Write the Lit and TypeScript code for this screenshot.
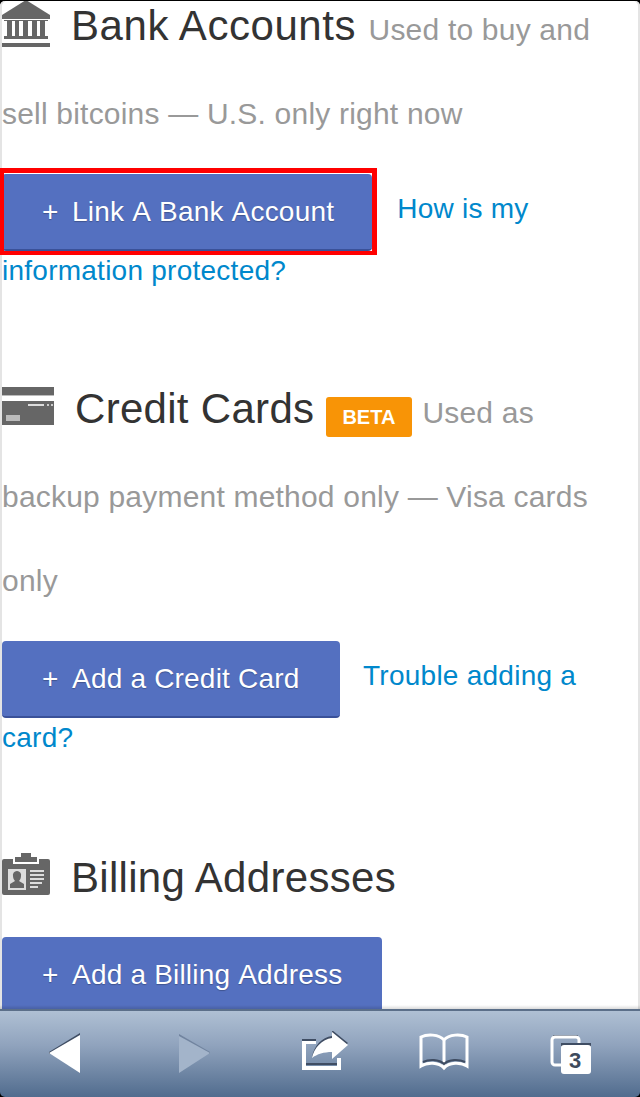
import { LitElement, html, css } from "lit";
import { customElement } from "lit/decorators.js";

const bank = html`<svg class="ico bank" width="48" height="47" viewBox="0 0 48 47"><g fill="#666"><path d="M24 0 L48 15 V19 H0 V15 Z"/><rect x="2" y="20" width="44" height="1"/><rect x="5" y="21" width="5" height="15"/><rect x="13" y="21" width="4" height="15"/><rect x="21" y="21" width="5" height="15"/><rect x="30" y="21" width="5" height="15"/><rect x="38" y="21" width="5" height="15"/><rect x="2" y="36" width="44" height="3"/><rect x="0" y="43" width="48" height="4"/></g></svg>`;
const card = html`<svg class="ico card" width="52" height="38" viewBox="0 0 52 38"><rect width="52" height="8" fill="#666"/><rect y="8" width="52" height="1" fill="#bbb"/><rect y="14" width="52" height="24" fill="#666"/><rect x="26" y="17" width="16" height="2" fill="#ddd"/><rect x="45" y="17" width="2" height="2" fill="#ccc"/><rect x="49" y="17" width="2" height="2" fill="#ccc"/><rect x="4" y="28" width="14" height="6" fill="#bbb"/></svg>`;
const id = html`<svg class="ico id" width="48" height="42" viewBox="0 0 48 42"><path fill="#666" d="M19 0h10v4h6v5H13V4h6zM2 6h9v5h26V6h9a2 2 0 0 1 2 2v32a2 2 0 0 1-2 2H2a2 2 0 0 1-2-2V8a2 2 0 0 1 2-2z"/><rect x="6" y="16" width="18" height="21" fill="#ddd"/><path fill="#666" d="M15 18a4 4 0 0 1 4 5c0 2-1 4-2 5l5 3v4H8v-4l5-3c-1-1-2-3-2-5a4 4 0 0 1 4-5z"/><g fill="#ddd"><rect x="28" y="17" width="14" height="2"/><rect x="28" y="21" width="14" height="2"/><rect x="28" y="25" width="14" height="2"/><rect x="28" y="29" width="12" height="2"/><rect x="28" y="33" width="8" height="2"/></g></svg>`;

@customElement("app-root")
export class AppRoot extends LitElement {
  static styles = css`
    :host { display: flex; flex-direction: column; height: 1097px; overflow: hidden; box-sizing: border-box; padding-top: 1px; background: #000; font-family: "Liberation Sans", Arial, sans-serif; }
    .page { position: relative; flex: 1; min-height: 0; overflow: hidden; box-sizing: border-box; background: #fff; border-radius: 5px 5px 0 0; box-shadow: inset 2px 0 #e4e4e4, inset -2px 0 #e4e4e4; padding: 0 18px 0 2px; }
    .page::after { content: ""; position: absolute; left: 0; right: 0; bottom: 0; height: 4px; background: linear-gradient(transparent, rgba(0,0,0,.14)); }
    .scroll { margin-top: -13px; }
    .line { font-size: 30px; letter-spacing: .2px; line-height: 84px; color: #999; margin: 0; }
    .line.tight { margin-bottom: -5px; }
    .ico { margin-right: 21px; }
    .bank { vertical-align: -7px; }
    .card { vertical-align: -2px; }
    .id { vertical-align: -3px; }
    .title { font-size: 42px; letter-spacing: .3px; line-height: 1; color: #333; font-weight: 400; margin-right: 3px; }
    .title.wide { letter-spacing: .55px; margin-right: 4px; }
    .beta { display: inline-block; background: #f89406; color: #fff; font-size: 20px; letter-spacing: 0; font-weight: 700; line-height: 40px; height: 40px; padding: 0 16.5px; border-radius: 3px; margin-right: 2px; vertical-align: -1px; }
    .act { font-size: 28px; letter-spacing: .25px; line-height: 62px; color: #0088cc; margin-bottom: 69px; }
    .act.second { margin-bottom: 71px; }
    .btn { position: relative; display: inline-block; background: #5470c0; color: #fff; font-kerning: none; letter-spacing: .2px; line-height: 34px; padding: 21px 40px 20px 40px; border-radius: 4px; border-bottom: 2px solid #3a5199; text-shadow: 0 1px 1px rgba(0,0,0,.25); margin: 18px 16px -11px 0; vertical-align: -3px; }
    .plus { display: inline-block; width: 30px; }
    .hl { padding-right: 38px; margin-right: 17px; }
    .hl::after { content: ""; position: absolute; left: -2px; top: -6px; right: -5px; bottom: -6px; border: solid #f00; border-width: 5px 5px 4px 4px; }
    .foot { flex: none; background: #000; }
    .bar { height: 86px; border-top: 2px solid #5b6f89; border-radius: 0 0 5px 5px; background: linear-gradient(#afc0d4, #90a3bd 40%, #516c8e); display: flex; align-items: flex-start; padding-left: 48px; }
    .bar svg { display: block; flex: none; margin-top: 22px; }
    .fwd { margin-left: 96px; }
    .bar .share { margin-left: 90px; margin-top: 20px; }
    .book { margin-left: 69px; }
    .tabs { margin-left: 81px; }
    .n { font: 700 22px "Liberation Sans", sans-serif; fill: #3d4a5c; text-anchor: middle; }
  `;
  render() {
    return html`<div class="page"><div class="scroll">
      <p class="line">${bank}<span class="title wide">Bank Accounts</span> Used to buy and sell bitcoins — U.S. only right now</p>
      <div class="act"><span class="btn hl"><span class="plus">+</span>Link A Bank Account</span> How is my information protected?</div>
      <p class="line">${card}<span class="title">Credit Cards</span> <span class="beta">BETA</span> Used as backup payment method only — Visa cards only</p>
      <div class="act second"><span class="btn"><span class="plus">+</span>Add a Credit Card</span> Trouble adding a card?</div>
      <p class="line tight">${id}<span class="title">Billing Addresses</span></p>
      <div class="act"><span class="btn"><span class="plus">+</span>Add a Billing Address</span></div>
    </div></div>
    <div class="foot"><div class="bar">
      <svg width="34" height="42" viewBox="0 0 34 42"><path d="M1 19 L32 0 V4 L1 21 Z" fill="#3f4d63"/><path d="M1 20 L32 2 V40 Z" fill="#fff"/></svg>
      <svg class="fwd" width="34" height="42" viewBox="0 0 34 42"><path d="M1 1 L32 19 V21 L1 5 Z" fill="#71849f"/><path d="M1 3 L32 20 L1 40 Z" fill="#a3b4ca"/></svg>
      <svg class="share" width="48" height="40" viewBox="0 0 48 40"><path d="M0 8h14v2H0z" fill="#3f4d63"/><path d="M0 10h14v3H4v22h31V27h4v12H0z" fill="#fff"/><path d="M4 32h31v2H4z" fill="#3f4d63"/><path d="M30 -1 L46 12 L30 26 V19 C22 19 15 21 10 26 C12 15 20 6 30 5 Z" fill="#3f4d63"/><path d="M30 1 L46 14 L30 28 V21 C22 21 15 23 10 27 C12 17 20 8 30 7 Z" fill="#fff"/></svg>
      <svg class="book" width="50" height="38" viewBox="0 0 50 38"><path d="M25 7C20 1 8 1 2 4V33C8 29 20 29 25 35C30 29 42 29 48 33V4C42 1 30 1 25 7ZM25 7V35" fill="none" stroke="#fff" stroke-width="3"/><path d="M4 29C10 26 20 26 25 31C30 26 40 26 46 29" fill="none" stroke="#3f4d63" stroke-width="2"/></svg>
      <svg class="tabs" width="42" height="42" viewBox="0 0 42 42"><path d="M3 3h25" stroke="#3f4d63" stroke-width="2"/><rect x="2" y="4" width="27" height="28" rx="3" fill="none" stroke="#fff" stroke-width="3"/><rect x="11" y="10" width="30" height="3" fill="#3f4d63"/><rect x="11" y="12" width="30" height="29" rx="3" fill="#fff"/><text class="n" x="25" y="35">3</text></svg>
    </div></div>`;
  }
}
